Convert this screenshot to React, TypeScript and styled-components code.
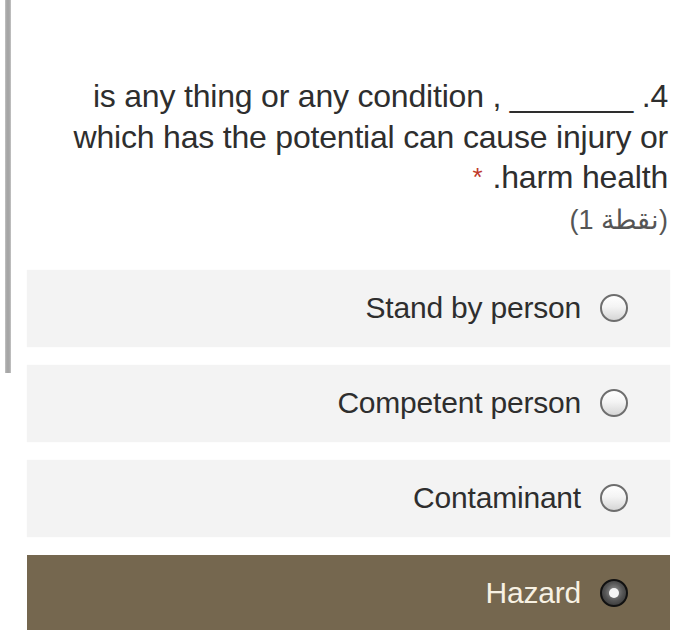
import React from "react";
import styled, { createGlobalStyle } from "styled-components";

const Global = createGlobalStyle`
  html, body { margin: 0; padding: 0; background: #ffffff; }
  body { font-family: "Liberation Sans", Arial, sans-serif; }
`;

const Page = styled.div`
  display: flex;
  align-items: flex-start;
  width: 700px;
  height: 630px;
  overflow: hidden;
  padding-left: 5px;
  box-sizing: border-box;
`;

const SideBar = styled.div`
  flex: none;
  width: 6px;
  height: 373px;
  background: linear-gradient(90deg, #c4c4c4 0%, #a6a6a6 30%, #a6a6a6 70%, #c4c4c4 100%);
`;

const Card = styled.div`
  flex: none;
  width: 643px;
  margin-left: 16px;
  padding-top: 76px;
  display: flex;
  flex-direction: column;
`;

const Question = styled.div`
  text-align: right;
  padding-right: 2px;
  color: #2e2e2e;
  font-size: 32px;
  line-height: 40.5px;
  letter-spacing: -0.2px;
`;

const Line = styled.div`
  white-space: nowrap;
`;

const Required = styled.span`
  color: #c0392b;
  font-size: 26px;
  margin-right: 10px;
  vertical-align: 2px;
`;

const Points = styled.div`
  text-align: right;
  padding-right: 2px;
  color: #555555;
  font-size: 27px;
  line-height: 40px;
  margin-top: 2px;
`;

const Options = styled.div`
  margin-top: 30px;
  display: flex;
  flex-direction: column;
  gap: 18px;
`;

const Option = styled.div<{ $selected?: boolean }>`
  height: 77px;
  display: flex;
  align-items: center;
  justify-content: flex-end;
  gap: 19px;
  padding-right: 42px;
  background: ${(p) => (p.$selected ? "#75674f" : "#f3f3f3")};
  color: ${(p) => (p.$selected ? "#f7f1e3" : "#2e2e2e")};
  font-size: 30px;
  letter-spacing: -0.2px;
  box-shadow: ${(p) => (p.$selected ? "none" : "0 0 1px rgba(0,0,0,0.06)")};
`;

const Radio = styled.span<{ $checked?: boolean }>`
  flex: none;
  width: 28px;
  height: 28px;
  border-radius: 50%;
  box-sizing: border-box;
  display: flex;
  align-items: center;
  justify-content: center;
  border: ${(p) => (p.$checked ? "2.5px solid #111" : "2px solid #6e6e6e")};
  background: ${(p) =>
    p.$checked
      ? "radial-gradient(circle at 50% 45%, #9a9a9a 0%, #555 50%, #2a2a2a 100%)"
      : "linear-gradient(180deg, #ffffff 0%, #f4f4f4 45%, #d6d6d6 100%)"};
`;

const Dot = styled.span`
  width: 10px;
  height: 10px;
  border-radius: 50%;
  background: #f4f4f4;
`;

const options = [
  { label: "Stand by person", selected: false },
  { label: "Competent person", selected: false },
  { label: "Contaminant", selected: false },
  { label: "Hazard", selected: true },
];

export default function App() {
  return (
    <>
      <Global />
      <Page>
        <SideBar />
        <Card>
          <Question>
            <Line>is any thing or any condition , _______ .4</Line>
            <Line>which has the potential can cause injury or</Line>
            <Line>
              <Required>*</Required>.harm health
            </Line>
          </Question>
          <Points>
            <span dir="ltr">(1 نقطة)</span>
          </Points>
          <Options>
            {options.map((o) => (
              <Option key={o.label} $selected={o.selected}>
                <span>{o.label}</span>
                <Radio $checked={o.selected}>{o.selected && <Dot />}</Radio>
              </Option>
            ))}
          </Options>
        </Card>
      </Page>
    </>
  );
}
